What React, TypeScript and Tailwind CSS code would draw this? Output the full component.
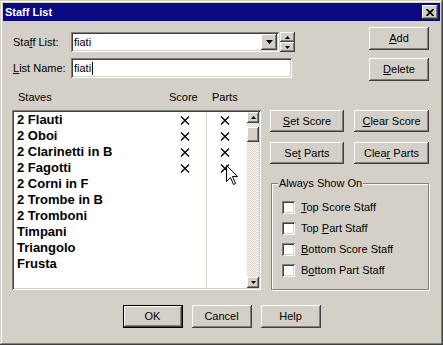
import React from 'react';

const raised =
  'shadow-[inset_-1px_-1px_#404040,inset_1px_1px_#ffffff,inset_-2px_-2px_#808080,inset_2px_2px_#d4d0c8]';
const sunken =
  'shadow-[inset_1px_1px_#808080,inset_-1px_-1px_#ffffff,inset_2px_2px_#404040,inset_-2px_-2px_#d4d0c8]';

const staves = [
  { name: '2 Flauti', score: true, parts: true },
  { name: '2 Oboi', score: true, parts: true },
  { name: '2 Clarinetti in B', score: true, parts: true },
  { name: '2 Fagotti', score: true, parts: true },
  { name: '2 Corni in F', score: false, parts: false },
  { name: '2 Trombe in B', score: false, parts: false },
  { name: '2 Tromboni', score: false, parts: false },
  { name: 'Timpani', score: false, parts: false },
  { name: 'Triangolo', score: false, parts: false },
  { name: 'Frusta', score: false, parts: false },
];

function Cross() {
  return (
    <svg width="10" height="9" viewBox="0 0 10 9" className="block">
      <path d="M1 0.5 L9 8.5 M9 0.5 L1 8.5" stroke="#000" strokeWidth="1.3" fill="none" />
    </svg>
  );
}

function Btn({ children, className = '', def = false }: { children: React.ReactNode; className?: string; def?: boolean }) {
  if (def) {
    return (
      <div className={`border border-black flex ${className}`}>
        <div className={`flex-1 flex items-center justify-center ${raised}`}>
          <span>{children}</span>
        </div>
      </div>
    );
  }
  return (
    <div className={`flex items-center justify-center ${raised} ${className}`}>
      <span>{children}</span>
    </div>
  );
}

function Check({ children }: { children: React.ReactNode }) {
  return (
    <div className="flex items-center h-[13px]">
      <div className={`w-[13px] h-[13px] bg-white ${sunken}`} />
      <span className="ml-[6px] leading-[13px]">{children}</span>
    </div>
  );
}

export default function App() {
  return (
    <div className="w-[443px] h-[345px] bg-[#d4d0c8] font-['Liberation_Sans',Arial,sans-serif] text-[11px] text-black relative select-none">
      <div className="w-full h-full p-[3px] flex flex-col shadow-[inset_-1px_-1px_#404040,inset_1px_1px_#d4d0c8,inset_-2px_-2px_#808080,inset_2px_2px_#ffffff]">
        {/* title bar */}
        <div className="h-[18px] bg-[#0a0a80] flex items-center pl-[2px] pr-[2px]">
          <span className="text-white font-bold text-[11px] leading-[13px]">Staff List</span>
          <div className={`ml-auto w-[16px] h-[14px] bg-[#d4d0c8] flex items-center justify-center ${raised}`}>
            <svg width="8" height="7" viewBox="0 0 8 7" className="block">
              <path d="M0.5 0 L7.5 7 M7.5 0 L0.5 7" stroke="#000" strokeWidth="1.7" fill="none" />
            </svg>
          </div>
        </div>

        {/* top section */}
        <div className="flex mt-[6px]">
          <div className="ml-[10px] mt-[5px] flex flex-col gap-[6px]">
            <div className="flex items-center h-[20px]">
              <span className="w-[58px]">
                Sta<u>f</u>f List:
              </span>
              <div className={`w-[208px] h-[20px] p-[2px] flex bg-white ${sunken}`}>
                <span className="flex-1 flex items-center pl-[1px]">fiati</span>
                <div className={`w-[16px] h-[16px] bg-[#d4d0c8] flex items-center justify-center ${raised}`}>
                  <svg width="7" height="4" viewBox="0 0 7 4" className="block">
                    <polygon points="0,0 7,0 3.5,4" fill="#000" />
                  </svg>
                </div>
              </div>
              <div className="ml-[1px] w-[15px] h-[20px] flex flex-col">
                <div className={`h-[10px] flex items-center justify-center ${raised}`}>
                  <svg width="5" height="3" viewBox="0 0 5 3" className="block">
                    <polygon points="0,3 5,3 2.5,0" fill="#000" />
                  </svg>
                </div>
                <div className={`h-[10px] flex items-center justify-center ${raised}`}>
                  <svg width="5" height="3" viewBox="0 0 5 3" className="block">
                    <polygon points="0,0 5,0 2.5,3" fill="#000" />
                  </svg>
                </div>
              </div>
            </div>
            <div className="flex items-center h-[20px]">
              <span className="w-[58px]">
                <u>L</u>ist Name:
              </span>
              <div className={`w-[221px] h-[20px] p-[2px] flex items-center bg-white ${sunken}`}>
                <span className="pl-[1px]">fiati</span>
                <span className="w-[1px] h-[13px] bg-black ml-[1px]" />
              </div>
            </div>
          </div>
          <div className="ml-auto mr-[11px] flex flex-col gap-[8px]">
            <Btn className="w-[60px] h-[23px]">
              <u>A</u>dd
            </Btn>
            <Btn className="w-[60px] h-[23px]">
              <u>D</u>elete
            </Btn>
          </div>
        </div>

        {/* list header */}
        <div className="flex mt-[10px] h-[13px] leading-[13px] ml-[15px]">
          <span className="w-[151px]">Staves</span>
          <span className="w-[43px]">Score</span>
          <span>Parts</span>
        </div>

        {/* middle section */}
        <div className="flex mt-[6px]">
          <div className={`ml-[9px] w-[249px] h-[180px] p-[2px] flex bg-white ${sunken}`}>
            <div className="flex-1 flex">
              <div className="w-[192px] flex flex-col">
                {staves.map((s) => (
                  <div key={s.name} className="h-[16px] flex items-center">
                    <span className="w-[166px] pl-[3px] font-bold text-[13px] leading-[16px] whitespace-nowrap">{s.name}</span>
                    {s.score && <Cross />}
                  </div>
                ))}
              </div>
              <div className="flex-1 border-l border-[#d4d0c8] flex flex-col">
                {staves.map((s) => (
                  <div key={s.name} className="h-[16px] flex items-center pl-[13px]">
                    {s.parts && <Cross />}
                  </div>
                ))}
              </div>
            </div>
            <div className="w-[12px] flex flex-col bg-[repeating-conic-gradient(#d4d0c8_0_25%,#ffffff_0_50%)] bg-[length:2px_2px]">
              <div className={`h-[11px] bg-[#d4d0c8] flex items-center justify-center ${raised}`}>
                <svg width="5" height="3" viewBox="0 0 5 3" className="block">
                  <polygon points="0,3 5,3 2.5,0" fill="#000" />
                </svg>
              </div>
              <div className={`mt-[4px] h-[15px] bg-[#d4d0c8] ${raised}`} />
              <div className={`mt-auto h-[11px] bg-[#d4d0c8] flex items-center justify-center ${raised}`}>
                <svg width="5" height="3" viewBox="0 0 5 3" className="block">
                  <polygon points="0,0 5,0 2.5,3" fill="#000" />
                </svg>
              </div>
            </div>
          </div>

          <div className="ml-[9px] flex flex-col">
            <div className="flex gap-[10px]">
              <Btn className="w-[74px] h-[22px]">
                <u>S</u>et Score
              </Btn>
              <Btn className="w-[75px] h-[22px]">
                <u>C</u>lear Score
              </Btn>
            </div>
            <div className="flex gap-[10px] mt-[10px]">
              <Btn className="w-[74px] h-[22px]">
                Se<u>t</u> Parts
              </Btn>
              <Btn className="w-[75px] h-[22px]">
                Clea<u>r</u> Parts
              </Btn>
            </div>
            <fieldset className="mt-[13px] ml-[1px] w-[158px] h-[113px] border border-[#808080] shadow-[1px_1px_0_#ffffff,inset_1px_1px_0_#ffffff] pt-[11px]">
              <legend className="ml-[6px] px-[1px] leading-[13px] bg-[#d4d0c8]">Always Show On</legend>
              <div className="ml-[10px] flex flex-col gap-[8px]">
                <Check>
                  <u>T</u>op Score Staff
                </Check>
                <Check>
                  Top <u>P</u>art Staff
                </Check>
                <Check>
                  <u>B</u>ottom Score Staff
                </Check>
                <Check>
                  B<u>o</u>ttom Part Staff
                </Check>
              </div>
            </fieldset>
          </div>
        </div>

        {/* bottom buttons */}
        <div className="flex justify-center gap-[9px] mt-[15px]">
          <Btn def className="w-[60px] h-[23px]">
            OK
          </Btn>
          <Btn className="w-[60px] h-[23px]">Cancel</Btn>
          <Btn className="w-[60px] h-[23px]">Help</Btn>
        </div>
      </div>

      {/* mouse pointer */}
      <svg width="13" height="21" viewBox="0 0 13 21" className="absolute left-[226px] top-[165px]">
        <path d="M0.5 0.5 L0.5 16.5 L4.5 12.5 L7.5 19.5 L9.5 18.5 L6.5 11.5 L11.5 11.5 Z" fill="#fff" stroke="#000" strokeWidth="1" />
      </svg>
    </div>
  );
}
